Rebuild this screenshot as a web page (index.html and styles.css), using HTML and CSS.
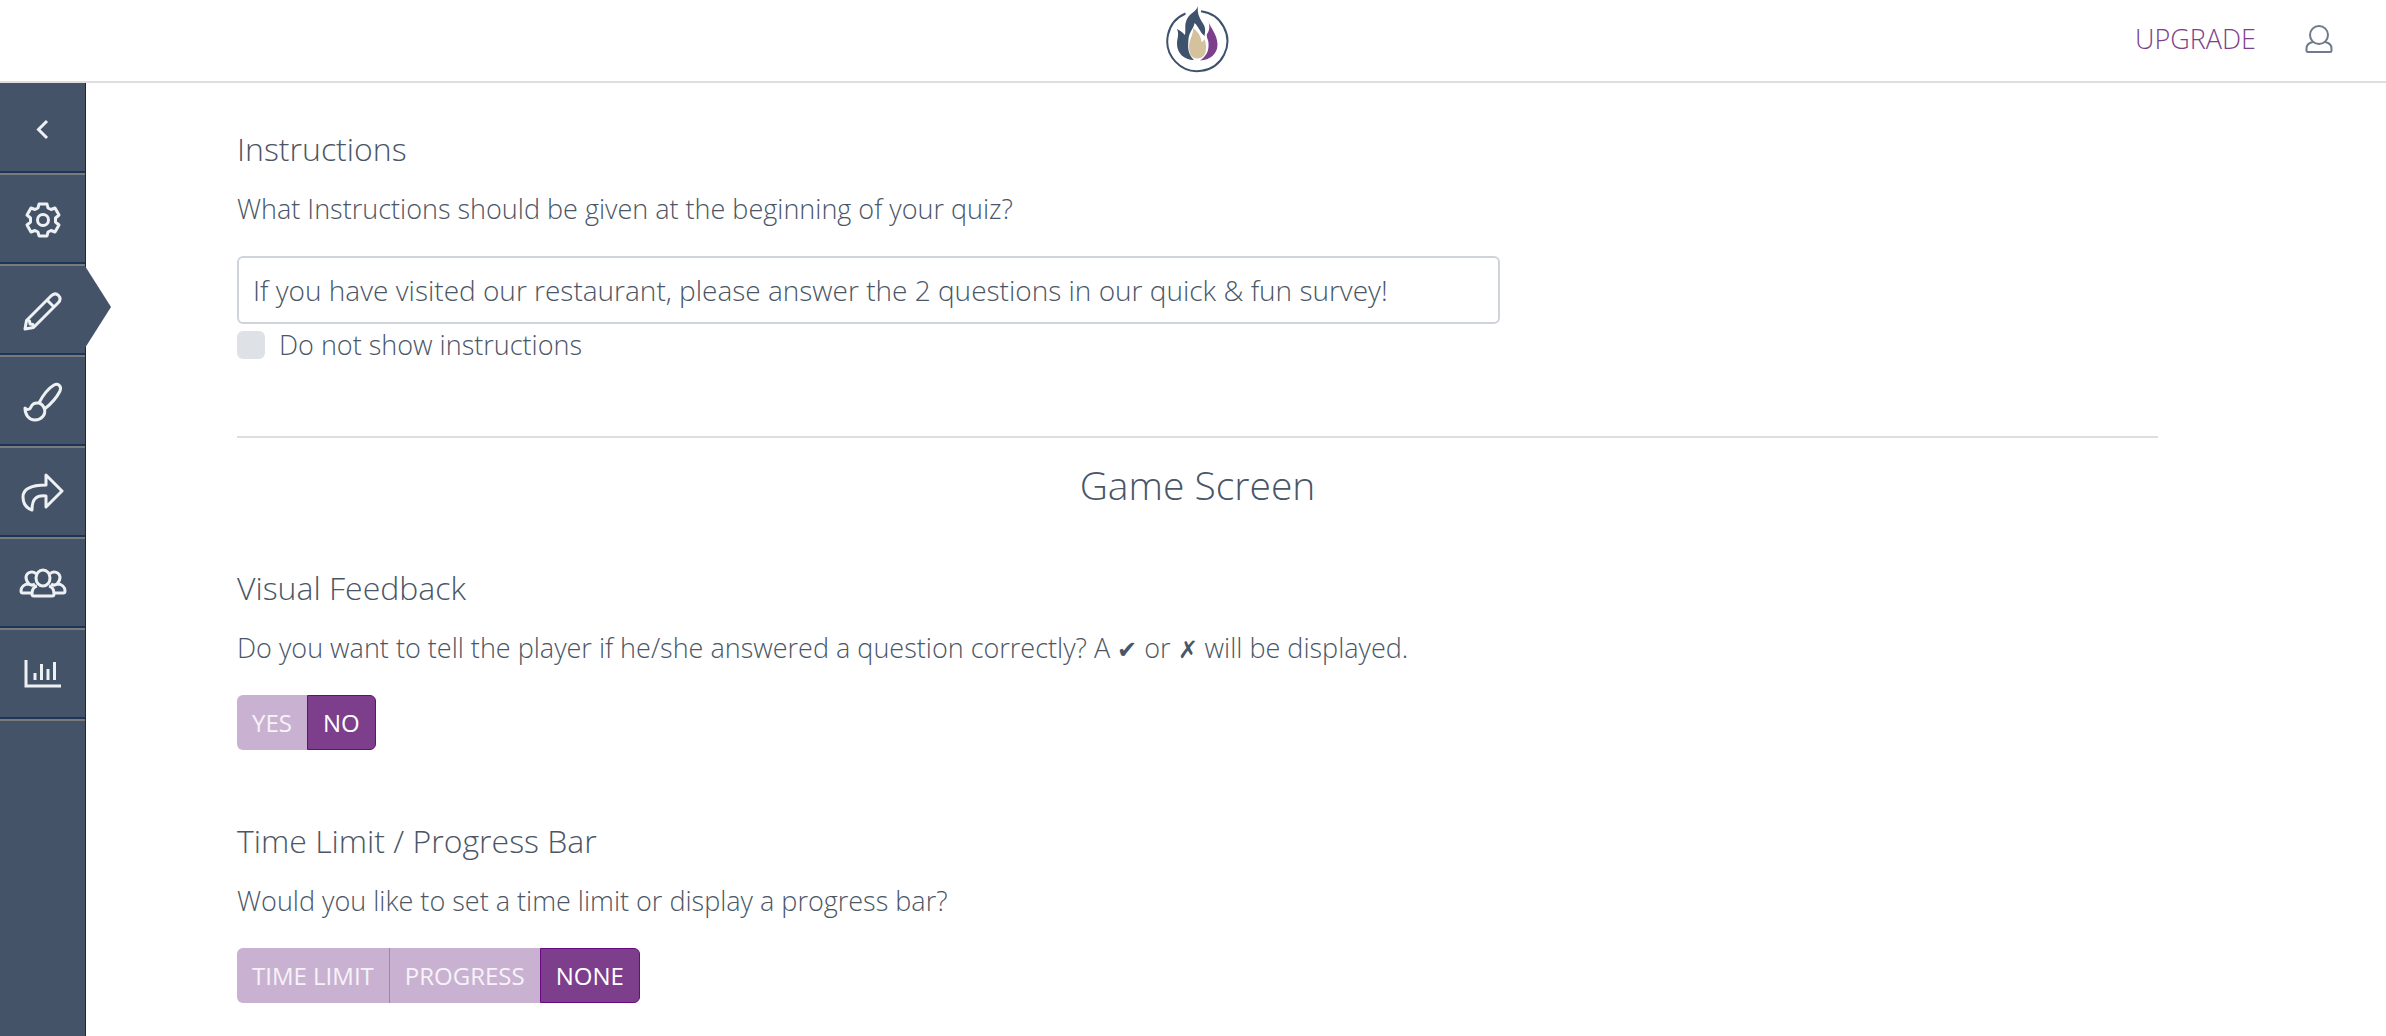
FILE: index.html
```html
<!DOCTYPE html>
<html lang="en">
<head>
    <meta charset="UTF-8">
    <meta name="viewport" content="width=device-width, initial-scale=1.0">
    <title>Quiz Editor</title>
    <link rel="stylesheet" href="styles.css">
</head>
<body>
    <header class="topbar">
        <a class="logo" href="#" aria-label="Home">
            <svg width="64" height="72" viewBox="0 0 64 72">
                <path d="M20.500 10.500A30 30 0 1 0 36 8.300" fill="none" stroke="#3f526b" stroke-width="2"/>
                <path d="M33 3C32 9 34 14 37 19C40 23 41 26 39.500 33L36.500 30C34 26 32 22 29.500 20C29 25 24 29 23.500 36C23 43 22 50 29 57C19 57 12 50 12 41C12 35 14.500 32 12 26C16 28 18 30 20 32C21 26 19 22 22 16C25 10 31 9 33 3Z" fill="#3f526b"/>
                <path d="M28 25C29 31 24 36 24 44C24 51 27 55.500 32.300 55.500C38 55.500 41 51 41 45C41 41 40.500 39 39.500 36C38.500 38 37.500 39 36.500 39C36 32 32 28 28 25Z" fill="#d3c29c"/>
                <path d="M42.500 16C44 23 52.500 31 52.500 41.500C52.500 51 45 57 35 57.500C42 53 44 47 43.500 40C43.300 36 41 34 42 31C45 27 45 22 42.500 16Z" fill="#7d3f8c"/>
            </svg>
        </a>
        <nav class="account">
            <a class="upgrade" href="#">UPGRADE</a>
            <a class="user" href="#" aria-label="Account">
                <svg width="28" height="28" viewBox="0 0 28 28" fill="none" stroke="#6f7a8b" stroke-width="2" stroke-linejoin="round">
                    <circle cx="14" cy="10" r="9"/>
                    <path d="M8 17C3 18 1.500 20 1.500 23.500V25.500Q1.500 27 3 27H25Q26.500 27 26.500 25.500V23.500C26.500 20 25 18 20 17"/>
                </svg>
            </a>
        </nav>
    </header>

    <div class="layout">
        <nav class="sidebar">
            <button type="button" class="side-item" aria-label="Collapse">
                <svg class="icon" viewBox="0 0 48 48"><path class="thick" d="M28 16L19.500 24.500L28 33"/></svg>
            </button>
            <button type="button" class="side-item" aria-label="Settings">
                <svg class="icon" viewBox="0 0 48 48">
                    <g transform="translate(24 24)">
                        <path d="M-5-12L-4-16H4L5-12L8-10.500L12-12L16-5L12.500-2V2L16 5L12 12L8 10.500L5 12L4 16H-4L-5 12L-8 10.500L-12 12L-16 5L-12.500 2V-2L-16-5L-12-12L-8-10.500Z"/>
                        <circle r="5.500"/>
                    </g>
                </svg>
            </button>
            <button type="button" class="side-item active" aria-label="Edit">
                <svg class="icon" viewBox="0 0 48 48">
                    <path d="M6 42L7.500 33.500L32 9C35 6 37.500 6.500 39.500 8.500S42 13 39 16L14.500 40.500Z"/>
                    <path d="M28 13L35 20M7.500 33.500L10.500 34L11 37L14 37.500L14.500 40.500"/>
                </svg>
            </button>
            <button type="button" class="side-item" aria-label="Design">
                <svg class="icon" viewBox="0 0 48 48">
                    <path d="M20 25C24 17 30 10 35 7C39 5 43 8 41 13C38 19 32 26 25.500 31"/>
                    <path d="M20 25C16 24.500 13 26 12 29C11 32 8 32 6 30C6 37 10 42 16 42C22 42 27 37 25.500 31C24.500 28 23 26 20 25Z"/>
                </svg>
            </button>
            <button type="button" class="side-item" aria-label="Share">
                <svg class="icon" viewBox="0 0 48 48">
                    <path d="M27 6L43 22L27 38V27C17 26 13 30 13 41C7 39 4 34 4 28C4 19 13 16 27 16Z"/>
                </svg>
            </button>
            <button type="button" class="side-item" aria-label="Players">
                <svg class="icon" viewBox="0 0 48 48">
                    <ellipse cx="24" cy="18" rx="7" ry="8"/>
                    <path d="M18 26C14 27 13 30 13 34Q13 36 15 36H33Q35 36 35 34C35 30 34 27 30 26"/>
                    <path d="M17 14C15 11 8 11 7 17C7 20 8 22 10 24C5 24 2 27 2 31Q2 33 4 33H13M31 14C33 11 40 11 41 17C41 20 40 22 38 24C43 24 46 27 46 31Q46 33 44 33H35M10 24C12 25.500 14 25.500 16 24M38 24C36 25.500 34 25.500 32 24"/>
                </svg>
            </button>
            <button type="button" class="side-item" aria-label="Reports">
                <svg class="icon" viewBox="0 0 48 48">
                    <path class="thick" d="M7 9V35H42"/>
                    <path class="thick" d="M16 22V29M22.500 13V29M29 18V29M35.500 11V29"/>
                </svg>
            </button>
        </nav>

        <main class="content">
            <section class="setting">
                <h3>Instructions</h3>
                <label class="hint" for="instructions">What Instructions should be given at the beginning of your quiz?</label>
                <input type="text" class="text-input" id="instructions" value="If you have visited our restaurant, please answer the 2 questions in our quick &amp; fun survey!">
                <label class="check"><input type="checkbox" id="hide_instructions">Do not show instructions</label>
            </section>

            <h2 class="divider">Game Screen</h2>

            <section class="setting">
                <h3>Visual Feedback</h3>
                <p class="hint">Do you want to tell the player if he/she answered a question correctly? A <span class="mark">&#10004;</span> or <span class="mark">&#10007;</span> will be displayed.</p>
                <div class="btn-group">
                    <button type="button" class="btn">YES</button>
                    <button type="button" class="btn active">NO</button>
                </div>
            </section>

            <section class="setting">
                <h3>Time Limit / Progress Bar</h3>
                <p class="hint">Would you like to set a time limit or display a progress bar?</p>
                <div class="btn-group">
                    <button type="button" class="btn">TIME LIMIT</button>
                    <button type="button" class="btn">PROGRESS</button>
                    <button type="button" class="btn active">NONE</button>
                </div>
            </section>
        </main>
    </div>
</body>
</html>
```

FILE: styles.css
```css
* {
    box-sizing: border-box;
}
body {
    margin: 0;
    min-height: 100vh;
    display: flex;
    flex-direction: column;
    font-family: "Open Sans", sans-serif;
    font-size: 27px;
    font-weight: 300;
    line-height: 40px;
    color: #4a5666;
    background: #fff;
}
h2, h3, p {
    margin: 0;
    font-weight: 300;
}
button, input {
    font-family: inherit;
    font-weight: inherit;
}
svg {
    display: block;
}

/* top bar */
.topbar {
    display: grid;
    grid-template-columns: 1fr auto 1fr;
    align-items: center;
    height: 83px;
    padding: 0 53px 4px 60px;
    border-bottom: 2px solid #dedede;
}
.logo {
    grid-column: 2;
}
.account {
    display: flex;
    justify-content: flex-end;
    align-items: center;
    gap: 49px;
}
.upgrade {
    color: #7d3f8c;
    text-decoration: none;
}

.layout {
    flex: 1;
    display: flex;
}

/* side menu */
.sidebar {
    flex: none;
    width: 86px;
    padding-top: 1px;
    background: #455368;
    border-right: 1px solid #0f2a50;
}
.side-item {
    position: relative;
    display: flex;
    justify-content: center;
    align-items: center;
    width: 100%;
    height: 91px;
    padding: 0;
    background: #455368;
    border: 0;
    border-bottom: 2px solid #7b7a7a;
    box-shadow: inset 0 -2px #1d3557;
    cursor: pointer;
}
.side-item.active::after {
    content: "";
    position: absolute;
    top: 0;
    left: 100%;
    width: 26px;
    height: 82px;
    background: #455368;
    clip-path: polygon(0 0, 100% 50%, 0 100%);
}
.icon {
    width: 48px;
    height: 48px;
    fill: none;
    stroke: #eef1f4;
    stroke-width: 3;
    stroke-linejoin: round;
}
.icon .thick {
    stroke-linejoin: miter;
}

/* settings */
.content {
    flex: 1;
    padding: 46px 228px 0 151px;
}
.setting {
    display: flex;
    flex-direction: column;
    align-items: flex-start;
    margin-bottom: 71px;
}
.setting h3 {
    font-size: 32px;
    margin-bottom: 20px;
}
.hint {
    margin-bottom: 27px;
}
.text-input {
    width: 1263px;
    max-width: 100%;
    height: 68px;
    padding: 0 14px;
    font-size: 28px;
    color: #4a5666;
    border: 2px solid #ced4da;
    border-radius: 6px;
}
.check {
    display: flex;
    align-items: center;
    gap: 14px;
    margin-top: 1px;
}
.check input {
    appearance: none;
    width: 28px;
    height: 28px;
    margin: 0;
    background: #dee2e6;
    border-radius: 6px;
}
.check input:checked {
    background: #7d3f8c;
}
.divider {
    font-size: 39px;
    line-height: 50px;
    text-align: center;
    padding-top: 22px;
    margin-bottom: 58px;
    border-top: 2px solid #dedede;
}
.mark {
    font-family: "DejaVu Sans", sans-serif;
    font-size: 24px;
    line-height: 1;
}
.btn-group {
    display: flex;
}
.btn {
    height: 55px;
    padding: 0 15px;
    font-size: 24px;
    font-weight: 400;
    color: #f7f2f9;
    background: #c9b2d1;
    border: 0;
    cursor: pointer;
}
.btn + .btn {
    border-left: 1px solid #a67fb4;
}
.btn:first-child {
    border-radius: 6px 0 0 6px;
}
.btn:last-child {
    border-radius: 0 6px 6px 0;
}
.btn.active {
    color: #fff;
    background: #7d3f8c;
    border: 1px solid #690a80;
}
```
